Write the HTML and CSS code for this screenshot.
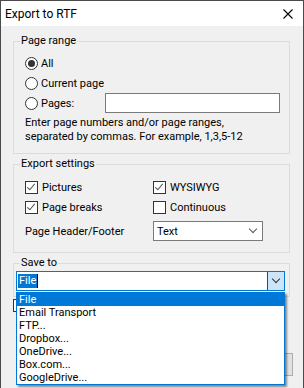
FILE: index.html
```html
<!DOCTYPE html>
<html lang="en">
<head>
<meta charset="UTF-8" />
<title>Export to RTF</title>
<link rel="stylesheet" href="styles.css">
</head>
<body>

<div class="window">
  <div class="titlebar">
    <span class="title">Export to RTF</span>
    <svg class="close" width="10" height="10" viewBox="0 0 10 10">
      <path d="M0.5 0.5 L9.5 9.5 M9.5 0.5 L0.5 9.5" stroke="#000" stroke-width="1.1" fill="none" />
    </svg>
  </div>

  <div class="content">
    <fieldset class="group range">
      <legend>Page range</legend>
      <div class="opt"><span class="radio on"></span>All</div>
      <div class="opt"><span class="radio"></span>Current page</div>
      <div class="opt"><span class="radio"></span><span class="pages-label">Pages:</span><span class="textbox"></span></div>
      <p class="hint">Enter page numbers and/or page ranges,<br>separated by commas. For example, 1,3,5-12</p>
    </fieldset>

    <fieldset class="group settings">
      <legend>Export settings</legend>
      <div class="checks">
        <div class="opt"><span class="check on"></span>Pictures</div>
        <div class="opt"><span class="check on"></span>WYSIWYG</div>
        <div class="opt"><span class="check on"></span>Page breaks</div>
        <div class="opt"><span class="check"></span>Continuous</div>
        <div class="opt">Page Header/Footer</div>
        <div class="select">Text<span class="chevron"></span></div>
      </div>
    </fieldset>

    <fieldset class="group saveto">
      <legend>Save to</legend>
      <div class="combo">
        <span class="combo-text"><span class="sel">File</span><span class="caret"></span></span>
        <span class="combo-btn"><span class="chevron"></span></span>
      </div>
    </fieldset>

    <!-- covered by the open list, only edges show -->
    <div class="opt open-after"><span class="check"></span></div>

    <div class="footer">
      <span class="btn"></span>
      <span class="btn"></span>
    </div>
  </div>

  <!-- dropdown list of the Save to combo -->
  <ul class="popup">
    <li class="hot">File</li>
    <li>Email Transport</li>
    <li>FTP...</li>
    <li>Dropbox...</li>
    <li>OneDrive...</li>
    <li>Box.com...</li>
    <li>GoogleDrive...</li>
  </ul>
</div>

</body>
</html>
```

FILE: styles.css
```css
* {
  box-sizing: border-box;
}
body {
  margin: 0;
  padding: 0;
  background: #f0f0f0;
  font-family: Roboto, "Noto Sans", sans-serif;
  font-size: 11px;
  color: #000;
}
.window {
  position: relative;
  width: 304px;
  height: 388px;
  border: 1px solid #4a4a4a;
  border-bottom: none;
  background: #f0f0f0;
  overflow: hidden;
}
.titlebar {
  height: 25px;
  background: #fff;
  display: flex;
  align-items: center;
  padding: 0 10px 0 4px;
}
.title {
  flex: 1;
  font-size: 12px;
  line-height: 16px;
}
.close {
  display: block;
  margin-top: 1px;
}
.content {
  padding: 7px 13px 0 12px;
}
.group {
  margin: 0;
  min-width: 0;
  border: 1px solid #dcdcdc;
  padding: 0 0 9px 11px;
}
.group legend {
  padding: 0 1px;
  margin-left: -5px;
  line-height: 16px;
}
.settings,
.saveto {
  margin-top: 2px;
}
.opt {
  display: flex;
  align-items: center;
  height: 20px;
  white-space: nowrap;
}
.range .opt:first-of-type {
  margin-top: 4px;
}
.radio {
  width: 13px;
  height: 13px;
  border: 1px solid #333;
  border-radius: 50%;
  background: #fff;
  margin-right: 3px;
  display: flex;
  align-items: center;
  justify-content: center;
  flex: none;
}
.radio.on::after {
  content: "";
  width: 7px;
  height: 7px;
  border-radius: 50%;
  background: #333;
}
.pages-label {
  width: 64px;
}
.textbox {
  width: 175px;
  height: 20px;
  border: 1px solid #7a7a7a;
  background: #fff;
}
.hint {
  margin: 3px 0 0;
  line-height: 14px;
  white-space: nowrap;
}
.settings {
  padding-bottom: 11px;
}
.checks {
  display: grid;
  grid-template-columns: 128px 1fr;
  margin-top: 5px;
}
.check {
  position: relative;
  width: 13px;
  height: 13px;
  border: 1px solid #333;
  background: #fff;
  margin-right: 4px;
  flex: none;
}
.check.on::after {
  content: "";
  position: absolute;
  left: 3px;
  top: 0px;
  width: 3px;
  height: 7px;
  border: solid #555;
  border-width: 0 1px 1px 0;
  transform: rotate(40deg);
}
.checks .opt:nth-child(5),
.select {
  margin-top: 4px;
}
.select {
  width: 110px;
  height: 20px;
  border: 1px solid #7a7a7a;
  background: #fff;
  display: flex;
  align-items: center;
  justify-content: space-between;
  padding: 0 6px 0 3px;
}
.chevron {
  width: 6px;
  height: 6px;
  border: solid #555;
  border-width: 0 1px 1px 0;
  transform: rotate(45deg);
  margin-top: -4px;
}
.saveto {
  padding-bottom: 5px;
}
.combo {
  margin-left: -9px;
  width: 269px;
  height: 20px;
  border: 1px solid #0078d7;
  background: #fff;
  display: flex;
}
.combo-text {
  flex: 1;
  display: flex;
  align-items: center;
  padding-left: 1px;
}
.sel {
  background: #0078d7;
  color: #fff;
  line-height: 14px;
  padding: 0 1px;
}
.caret {
  width: 1px;
  height: 14px;
  background: #000;
}
.combo-btn {
  width: 17px;
  background: #cce4f7;
  border-left: 1px solid #005499;
  display: flex;
  align-items: center;
  justify-content: center;
}
.combo-btn .chevron {
  border-color: #333;
}
.open-after {
  margin-top: 2px;
  height: 13px;
}
.footer {
  display: flex;
  justify-content: flex-end;
  gap: 8px;
  margin: 41px -3px 0 0;
}
.btn {
  width: 75px;
  height: 23px;
  border: 1px solid #adadad;
  background: #e1e1e1;
}
.popup {
  position: absolute;
  left: 15px;
  top: 291px;
  width: 269px;
  height: 93px;
  margin: 0;
  padding: 0;
  list-style: none;
  background: #fff;
  border: 1px solid #0078d7;
  box-shadow: 2px 2px 2px rgba(0, 0, 0, 0.45);
}
.popup li {
  height: 13px;
  line-height: 13px;
  padding-left: 2px;
  white-space: nowrap;
}
.popup li.hot {
  background: #0078d7;
  color: #fff;
}
```
